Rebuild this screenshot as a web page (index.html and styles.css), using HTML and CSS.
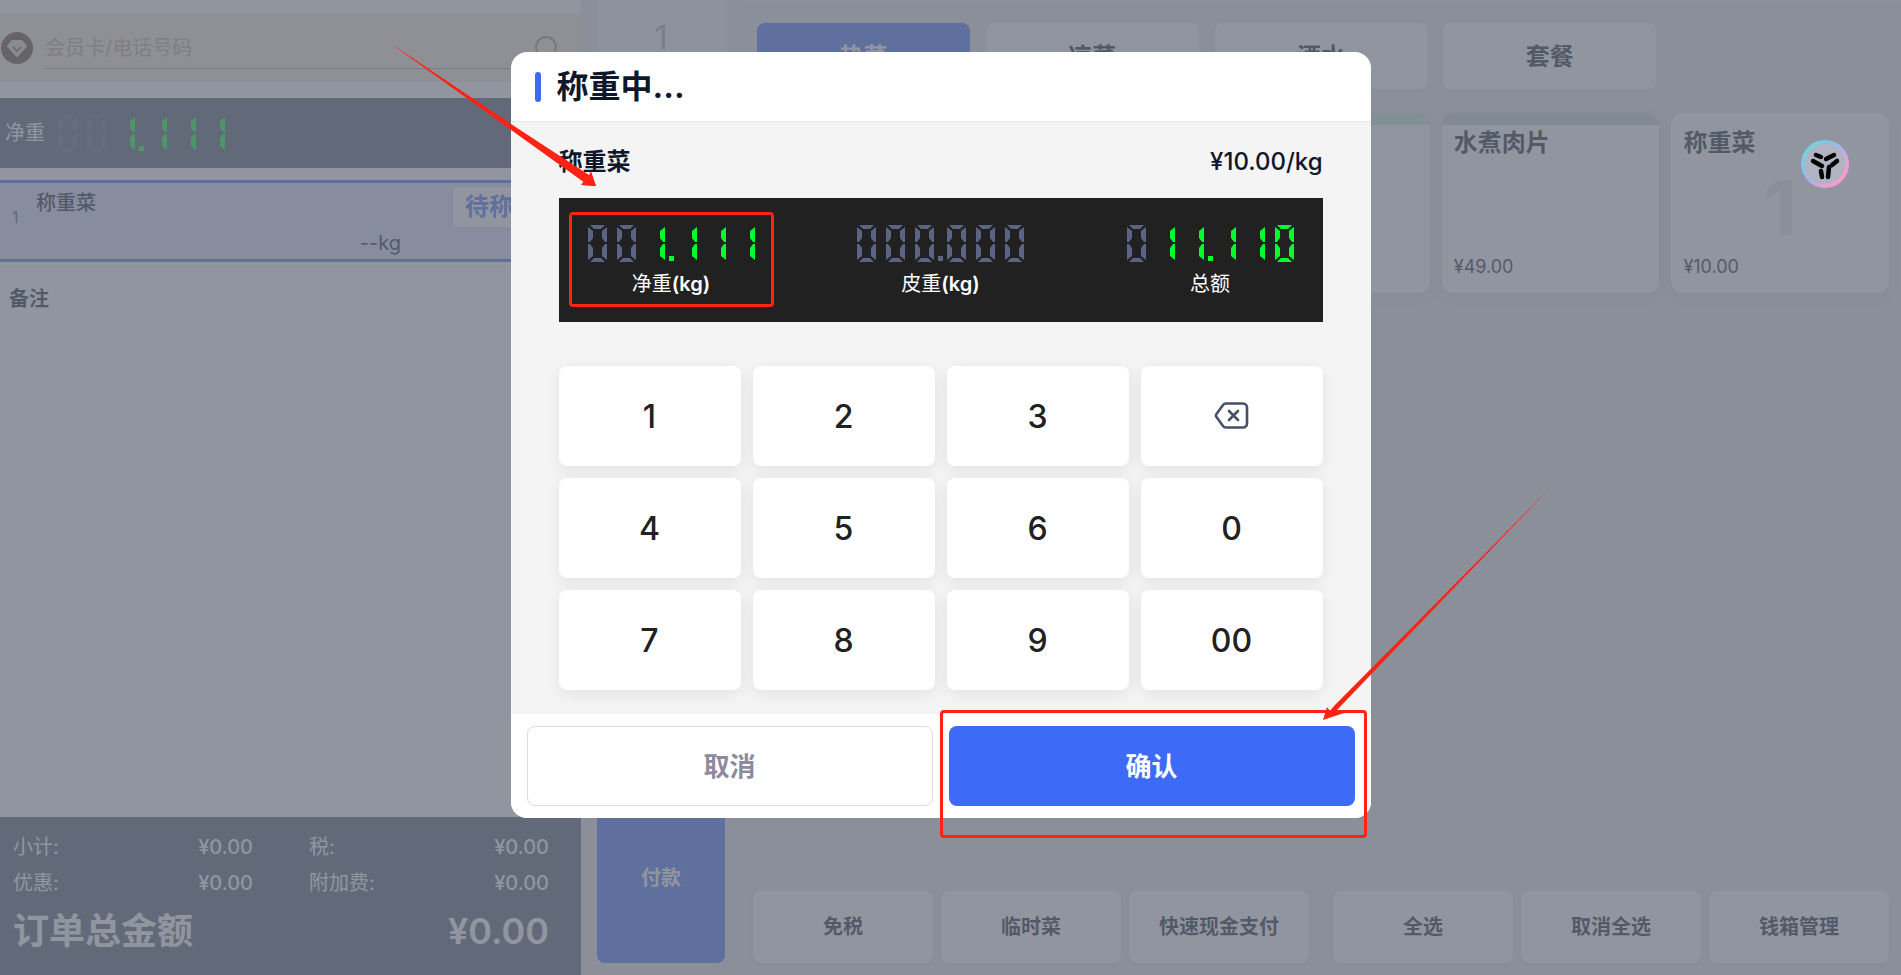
FILE: index.html
```html
<!DOCTYPE html>
<html lang="zh-Hans">
<head>
    <meta charset="UTF-8">
    <meta name="viewport" content="width=device-width, initial-scale=1.0">
    <title>称重中</title>
    <link rel="stylesheet" href="styles.css">
</head>
<body>

    <!-- 数码管图形定义 -->
    <svg class="defs" width="0" height="0" aria-hidden="true">
        <defs>
            <g id="seg-right">
                <path d="M19 2v15h-2l-3-4V6z"/>
                <path d="M17 19h2v16l-5-4v-8z"/>
            </g>
            <g id="seg-ring">
                <path d="M2 0h15l-4 4H6zM2 37h15l-4-4H6z"/>
                <path d="M0 2l5 4v7l-3 4H0zM0 19h2l3 4v8l-5 4z"/>
                <path d="M19 2v15h-2l-3-4V6zM17 19h2v16l-5-4v-8z"/>
            </g>
            <g id="reading-net">
                <use class="seg-off" href="#seg-ring" x="1"/>
                <use class="seg-off" href="#seg-ring" x="30"/>
                <use class="seg-on" href="#seg-right" x="59"/>
                <rect class="seg-on" x="82" y="31" width="5" height="5"/>
                <use class="seg-on" href="#seg-right" x="91"/>
                <use class="seg-on" href="#seg-right" x="120"/>
                <use class="seg-on" href="#seg-right" x="149"/>
            </g>
        </defs>
    </svg>

    <div class="pos">
        <!-- 左侧订单 -->
        <aside class="order">
            <div class="member">
                <svg class="member-icon" viewBox="0 0 32 32" aria-hidden="true">
                    <circle cx="16" cy="16" r="16" fill="#5a4030"/>
                    <path d="M11 9h10l4 5-9 10L7 14z" fill="#dcdac0" stroke="#dcdac0" stroke-width="2" stroke-linejoin="round"/>
                    <path d="M12 15l4 4 4-4" fill="none" stroke="#5a4030" stroke-width="1.500"/>
                </svg>
                <div class="member-field">
                    <input type="text" class="member-input" placeholder="会员卡/电话号码" aria-label="会员卡/电话号码">
                    <svg class="member-search" viewBox="0 0 28 28" aria-hidden="true">
                        <circle cx="13" cy="14" r="10"/>
                        <path d="M20 21l6 6"/>
                    </svg>
                </div>
            </div>

            <div class="scale-bar">
                <span>净重</span>
                <svg class="reading-svg" viewBox="0 0 169 37" role="img" aria-label="1.111"><use href="#reading-net"/></svg>
            </div>

            <div class="line-item">
                <span class="line-no">1</span>
                <div class="line-main">
                    <span class="line-name">称重菜</span>
                    <span class="line-weight">--kg</span>
                </div>
                <span class="line-tag">待称重</span>
            </div>

            <div class="remark">备注</div>

            <div class="totals">
                <dl class="totals-grid">
                    <div><dt>小计:</dt><dd>¥0.00</dd></div>
                    <div><dt>税:</dt><dd>¥0.00</dd></div>
                    <div><dt>优惠:</dt><dd>¥0.00</dd></div>
                    <div><dt>附加费:</dt><dd>¥0.00</dd></div>
                </dl>
                <div class="grand-total">
                    <span>订单总金额</span>
                    <span class="grand-amount">¥0.00</span>
                </div>
            </div>
        </aside>

        <!-- 数量与付款 -->
        <div class="rail">
            <div class="rail-qty">1</div>
            <button type="button" class="btn-pay">付款</button>
        </div>

        <!-- 右侧菜品 -->
        <main class="menu">
            <nav class="tabs">
                <button type="button" class="tab active">热菜</button>
                <button type="button" class="tab">凉菜</button>
                <button type="button" class="tab">酒水</button>
                <button type="button" class="tab">套餐</button>
            </nav>
            <div class="dishes">
                <div class="dish mint"></div>
                <div class="dish mint"></div>
                <div class="dish mint"></div>
                <div class="dish sage">
                    <span class="dish-name">水煮肉片</span>
                    <span class="dish-price">¥49.00</span>
                </div>
                <div class="dish">
                    <span class="dish-name">称重菜</span>
                    <span class="dish-count">1</span>
                    <span class="dish-price">¥10.00</span>
                </div>
            </div>
            <div class="actions">
                <div class="action-group">
                    <button type="button" class="action">免税</button>
                    <button type="button" class="action">临时菜</button>
                    <button type="button" class="action">快速现金支付</button>
                </div>
                <div class="action-group">
                    <button type="button" class="action">全选</button>
                    <button type="button" class="action">取消全选</button>
                    <button type="button" class="action">钱箱管理</button>
                </div>
            </div>
        </main>
    </div>

    <!-- 称重弹窗 -->
    <div class="overlay">
        <section class="modal" role="dialog" aria-labelledby="modal-title">
            <header class="modal-header">
                <h1 id="modal-title">称重中...</h1>
            </header>

            <div class="modal-body">
                <div class="product">
                    <span class="product-name">称重菜</span>
                    <span class="product-price">¥10.00/kg</span>
                </div>

                <div class="display">
                    <div class="reading marked">
                        <svg class="reading-svg" viewBox="0 0 169 37" role="img" aria-label="1.111"><use href="#reading-net"/></svg>
                        <span class="reading-label">净重<b>(kg)</b></span>
                    </div>
                    <div class="reading">
                        <svg class="reading-svg" viewBox="0 0 169 37" role="img" aria-label="000.000">
                            <g class="seg-off">
                                <use href="#seg-ring" x="1"/>
                                <use href="#seg-ring" x="30"/>
                                <use href="#seg-ring" x="59"/>
                                <rect x="82" y="31" width="5" height="5"/>
                                <use href="#seg-ring" x="91"/>
                                <use href="#seg-ring" x="120"/>
                                <use href="#seg-ring" x="149"/>
                            </g>
                        </svg>
                        <span class="reading-label">皮重<b>(kg)</b></span>
                    </div>
                    <div class="reading">
                        <svg class="reading-svg" viewBox="0 0 169 37" role="img" aria-label="11.110">
                            <use class="seg-off" href="#seg-ring" x="1"/>
                            <g class="seg-on">
                                <use href="#seg-right" x="30"/>
                                <use href="#seg-right" x="59"/>
                                <rect x="82" y="31" width="5" height="5"/>
                                <use href="#seg-right" x="91"/>
                                <use href="#seg-right" x="120"/>
                                <use href="#seg-ring" x="149"/>
                            </g>
                        </svg>
                        <span class="reading-label">总额</span>
                    </div>
                </div>

                <div class="keypad">
                    <button type="button">1</button>
                    <button type="button">2</button>
                    <button type="button">3</button>
                    <button type="button" aria-label="删除">
                        <svg class="icon-delete" viewBox="0 0 36 32" aria-hidden="true">
                            <path d="M12 3.5h17a4 4 0 0 1 4 4v16a4 4 0 0 1-4 4H12a4 4 0 0 1-3-1.500L2.500 17a2.500 2.500 0 0 1 0-3L9 5a4 4 0 0 1 3-1.500z"/>
                            <path d="M15 11l9 9M24 11l-9 9"/>
                        </svg>
                    </button>
                    <button type="button">4</button>
                    <button type="button">5</button>
                    <button type="button">6</button>
                    <button type="button">0</button>
                    <button type="button">7</button>
                    <button type="button">8</button>
                    <button type="button">9</button>
                    <button type="button">00</button>
                </div>
            </div>

            <footer class="modal-footer">
                <div class="footer-cell">
                    <button type="button" class="btn-cancel">取消</button>
                </div>
                <div class="footer-cell marked">
                    <button type="button" class="btn-confirm">确认</button>
                </div>
            </footer>

            <!-- 操作指引箭头 -->
            <svg class="guides" viewBox="0 0 860 766" aria-hidden="true">
                <path d="M-121 -9L78 126l2-4 5 12-14-1 3-2z"/>
                <path d="M-121 -9L0 72l78 51 2-4 5 15-15-1 3-4L0 76z"/>
                <path d="M1040 435L825 659l8 2-21 7 4-13 3 4 4-5z"/>
            </svg>
        </section>
    </div>

    <!-- 悬浮助手 -->
    <button type="button" class="assistant" aria-label="助手">
        <svg viewBox="0 0 48 48" aria-hidden="true">
            <g stroke="#000" stroke-width="4.500" stroke-linecap="round">
                <path d="M15 15l5 2M25 19l8-4M12 21l9 5M36 21l-5 4M20 31l1 6M28 27l-1 10"/>
            </g>
        </svg>
    </button>

</body>
</html>
```
FILE: styles.css
```css
* {
    box-sizing: border-box;
}
body {
    margin: 0;
    font-family: Inter, "Noto Sans CJK SC", sans-serif;
    font-size: 20px;
    line-height: 36px;
    color: #0f172a;
    background-color: #e7e7eb;
}
button {
    padding: 0 0 4px;
    font-family: inherit;
    border: none;
    cursor: pointer;
}
.defs {
    position: absolute;
}
.pos {
    display: flex;
    gap: 16px;
    height: 100vh;
    min-height: 900px;
}

/* ===== 左侧订单 ===== */
.order {
    display: flex;
    flex-direction: column;
    width: 581px;
    padding-top: 13px;
    background-color: #fff;
}
.member {
    display: flex;
    align-items: center;
    gap: 12px;
    padding: 13px 0 13px 1px;
    background-color: #f6ebd8;
}
.member-icon {
    width: 32px;
    height: 32px;
}
.member-field {
    display: flex;
    flex: 1;
    align-items: center;
    padding-right: 20px;
    border-bottom: 1px solid #b3a284;
}
.member-input {
    flex: 1;
    height: 42px;
    padding: 2px 0 0;
    border: none;
    outline: none;
    background: transparent;
    font-family: inherit;
    font-size: 20px;
}
.member-input::placeholder {
    color: #b9a78c;
}
.member-search {
    width: 28px;
    height: 28px;
    fill: none;
    stroke: #a08c6c;
    stroke-width: 2;
}
.scale-bar {
    display: flex;
    align-items: center;
    gap: 12px;
    height: 70px;
    margin: 16px 0 12px;
    padding-left: 5px;
    color: #fff;
    background-color: #49556c;
}
.line-item {
    display: flex;
    align-items: flex-start;
    height: 82px;
    padding-right: 32px;
    border-top: 3px solid #3e6cfa;
    border-bottom: 3px solid #3e6cfa;
    background-color: #d6dcfc;
}
.line-no {
    width: 36px;
    padding: 16px 0 0 12px;
    font-size: 16px;
    color: #475569;
}
.line-main {
    display: flex;
    flex-direction: column;
    gap: 4px;
    width: 365px;
    padding-top: 2px;
}
.line-name {
    font-weight: 500;
}
.line-weight {
    text-align: right;
}
.line-tag {
    margin: 4px 0 0 auto;
    padding: 2px 12px;
    border-radius: 4px;
    font-size: 24px;
    font-weight: bold;
    color: #3e6cfa;
    background-color: #fff;
}
.remark {
    flex: 1;
    margin-top: 4px;
    padding: 14px 9px;
    border-top: 1px solid #ececf0;
    font-weight: bold;
}
.totals {
    padding: 12px 32px 20px 13px;
    color: #fff;
    background-color: #49556c;
}
.totals-grid {
    display: grid;
    grid-template-columns: 1fr 1fr;
    column-gap: 56px;
    margin: 0;
}
.totals-grid div {
    display: flex;
    justify-content: space-between;
}
.totals-grid dd {
    margin: 0;
    font-weight: 500;
}
.grand-total {
    display: flex;
    justify-content: space-between;
    padding-top: 6px;
    font-size: 36px;
    line-height: 48px;
    font-weight: bold;
}
.grand-amount {
    font-weight: 600;
}

/* ===== 数量与付款 ===== */
.rail {
    display: flex;
    flex-direction: column;
    justify-content: space-between;
    width: 128px;
    padding-bottom: 12px;
}
.rail-qty {
    height: 120px;
    padding-top: 20px;
    font-size: 32px;
    text-align: center;
    color: #a0a3b4;
    background-color: #f2f2f5;
}
.btn-pay {
    height: 170px;
    border-radius: 8px;
    font-size: 20px;
    font-weight: bold;
    color: #fff;
    background-color: #3e6cfa;
}

/* ===== 右侧菜品 ===== */
.menu {
    display: flex;
    flex: 1;
    flex-direction: column;
    margin-top: 6px;
    padding: 16px 12px 12px;
    border-top: 1px solid #d4d4da;
}
.tabs {
    display: grid;
    grid-template-columns: repeat(5, 1fr);
    gap: 16px;
    padding: 0 4px;
}
.tab {
    height: 66px;
    border-radius: 8px;
    font-size: 24px;
    font-weight: bold;
    color: #0f172a;
    background-color: #fff;
}
.tab.active {
    color: #fff;
    background-color: #3e6cfa;
}
.dishes {
    display: grid;
    grid-template-columns: repeat(5, 1fr);
    gap: 12px;
    margin: 24px 0 auto;
}
.dish {
    display: flex;
    position: relative;
    flex-direction: column;
    justify-content: space-between;
    height: 180px;
    padding: 0 12px 8px;
    border-top: 12px solid #fff;
    border-radius: 12px;
    background-color: #fff;
    box-shadow: 0 4px 16px rgba(0, 0, 0, 0.08);
}
.dish.mint {
    border-top-color: #c4e6d8;
}
.dish.sage {
    border-top-color: #c2d2cc;
}
.dish-name {
    font-size: 24px;
    font-weight: bold;
}
.dish-price {
    font-size: 18px;
}
/* 已点数量，压在卡片中央 */
.dish-count {
    position: absolute;
    inset: 0;
    font-size: 76px;
    line-height: 164px;
    font-weight: bold;
    text-align: center;
    color: #e2e2e7;
}
.actions {
    display: flex;
    gap: 24px;
}
.action-group {
    display: grid;
    flex: 1;
    grid-template-columns: repeat(3, 1fr);
    gap: 8px;
}
.action {
    height: 72px;
    border-radius: 8px;
    font-size: 20px;
    font-weight: bold;
    color: #0f172a;
    background-color: #fff;
    box-shadow: 0 1px 4px rgba(0, 0, 0, 0.08);
}

/* ===== 称重弹窗 ===== */
.overlay {
    display: flex;
    position: fixed;
    inset: 0;
    align-items: flex-start;
    justify-content: center;
    padding: 52px 20px 0 0;
    background-color: rgba(107, 112, 126, 0.74);
}
.modal {
    position: relative;
    width: 860px;
    max-width: 100%;
    border-radius: 16px;
    background-color: #fff;
}
.modal-header {
    display: flex;
    align-items: center;
    gap: 16px;
    height: 70px;
    padding: 0 24px;
    border-bottom: 1px solid #e5e7eb;
}
.modal-header::before {
    content: "";
    width: 6px;
    height: 30px;
    border-radius: 3px;
    background-color: #3d6bf7;
}
.modal-header h1 {
    margin: 0;
    font-size: 32px;
    font-weight: bold;
}
.modal-body {
    padding: 24px 48px;
    background-color: #f4f4f4;
}
.product {
    display: flex;
    justify-content: space-between;
    margin-bottom: 20px;
    font-size: 24px;
    line-height: 32px;
}
.product-name {
    font-weight: bold;
}
.product-price {
    font-weight: 500;
}
.display {
    display: flex;
    align-items: flex-start;
    justify-content: space-between;
    height: 124px;
    padding: 27px 28px 0;
    color: #fff;
    background-color: #212121;
}
.reading {
    display: flex;
    position: relative;
    flex-direction: column;
    gap: 4px;
    text-align: center;
}
.reading-svg {
    width: 169px;
    height: 37px;
}
.seg-on {
    fill: #00ff2b;
}
.seg-off {
    fill: #5b6484;
}
.reading-label b {
    font-weight: 600;
}
.keypad {
    display: grid;
    grid-template-columns: repeat(4, 1fr);
    gap: 12px;
    margin-top: 44px;
}
.keypad button {
    height: 100px;
    padding: 0;
    border-radius: 8px;
    font-size: 32px;
    font-weight: 500;
    color: #212121;
    background-color: #fff;
    box-shadow: 0 4px 16px rgba(0, 0, 0, 0.08);
}
.icon-delete {
    display: block;
    width: 36px;
    height: 32px;
    margin: 0 auto;
    fill: none;
    stroke: #475069;
    stroke-width: 2.600;
    stroke-linecap: round;
}
.modal-footer {
    display: flex;
    gap: 16px;
    padding: 12px 16px;
    border-radius: 0 0 16px 16px;
    background-color: #fff;
}
.footer-cell {
    position: relative;
    flex: 1;
}
.footer-cell button {
    display: block;
    width: 100%;
    height: 80px;
    border-radius: 8px;
    font-size: 26px;
    font-weight: bold;
}
.footer-cell .btn-cancel {
    border: 1px solid #dcdcdf;
    color: #8d8a9c;
    background-color: #fff;
}
.footer-cell .btn-confirm {
    color: #fff;
    background-color: #3d6bf7;
}

/* ===== 红色指引 ===== */
.marked::after {
    content: "";
    position: absolute;
    inset: -13px -18px -5px -18px;
    border: 3px solid #ff2314;
    border-radius: 4px;
    pointer-events: none;
}
.footer-cell.marked::after {
    inset: -16px -12px -32px -9px;
}
.guides {
    position: absolute;
    inset: 0;
    width: 100%;
    height: 100%;
    overflow: visible;
    fill: #ff2314;
    pointer-events: none;
}
.assistant {
    position: fixed;
    top: 140px;
    right: 52px;
    width: 48px;
    height: 48px;
    padding: 0;
    border: 4px solid transparent;
    border-radius: 50%;
    background: linear-gradient(#b1b4c0, #b1b4c0) padding-box, linear-gradient(135deg, #74d6dc 10%, #80c4e2 30%, #b9aee6 55%, #f49ccb 80%) border-box;
}
.assistant svg {
    display: block;
    width: 48px;
    height: 48px;
    margin: -4px;
}
```
